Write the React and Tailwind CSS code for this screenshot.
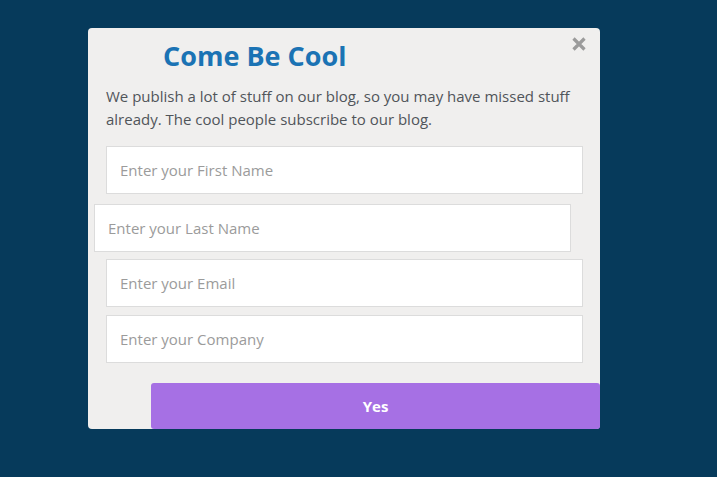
export default function App() {
  const font = { fontFamily: '"Open Sans", "Noto Sans", sans-serif' };
  return (
    <div className="min-h-[477px] w-full bg-[#063a5b] pt-[28px]" style={font}>
      <div className="relative ml-[88px] flex h-[401px] w-[512px] flex-col rounded-[4px] bg-[#f0efee] pt-[12px]">
        {/* close */}
        <button className="absolute right-[13px] top-[6px] text-[22px] font-bold leading-none text-[#9a9a9a]">
          <svg width="16" height="16" viewBox="0 0 16 16" className="mt-[2px]">
            <path d="M2.5 2.5 L13.5 13.5 M13.5 2.5 L2.5 13.5" stroke="#9b9b9b" strokeWidth="3.2" strokeLinecap="butt" />
          </svg>
        </button>

        <h1 className="pl-[75px] text-[27px] font-bold leading-[32px] text-[#1b73b4]">Come Be Cool</h1>

        <p className="mt-[13px] whitespace-nowrap pl-[18px] text-[15px] leading-[23px] text-[#50555a]">
          We publish a lot of stuff on our blog, so you may have missed stuff
          <br />
          already. The cool people subscribe to our blog.
        </p>

        <div className="mt-[15px] flex flex-col">
          <input
            placeholder="Enter your First Name"
            className="ml-[18px] h-[48px] w-[477px] border border-[#dcdcdc] bg-white pl-[13px] text-[15px] placeholder:text-[#9b9b9b] outline-none"
          />
          <input
            placeholder="Enter your Last Name"
            className="ml-[6px] mt-[10px] h-[48px] w-[477px] border border-[#dcdcdc] bg-white pl-[13px] text-[15px] placeholder:text-[#9b9b9b] outline-none"
          />
          <input
            placeholder="Enter your Email"
            className="ml-[18px] mt-[7px] h-[48px] w-[477px] border border-[#dcdcdc] bg-white pl-[13px] text-[15px] placeholder:text-[#9b9b9b] outline-none"
          />
          <input
            placeholder="Enter your Company"
            className="ml-[18px] mt-[8px] h-[48px] w-[477px] border border-[#dcdcdc] bg-white pl-[13px] text-[15px] placeholder:text-[#9b9b9b] outline-none"
          />
        </div>

        <button className="ml-[63px] mt-[20px] h-[46px] flex-1 rounded-[3px] bg-[#a670e4] text-[15px] font-bold text-white">
          Yes
        </button>
      </div>
    </div>
  );
}
